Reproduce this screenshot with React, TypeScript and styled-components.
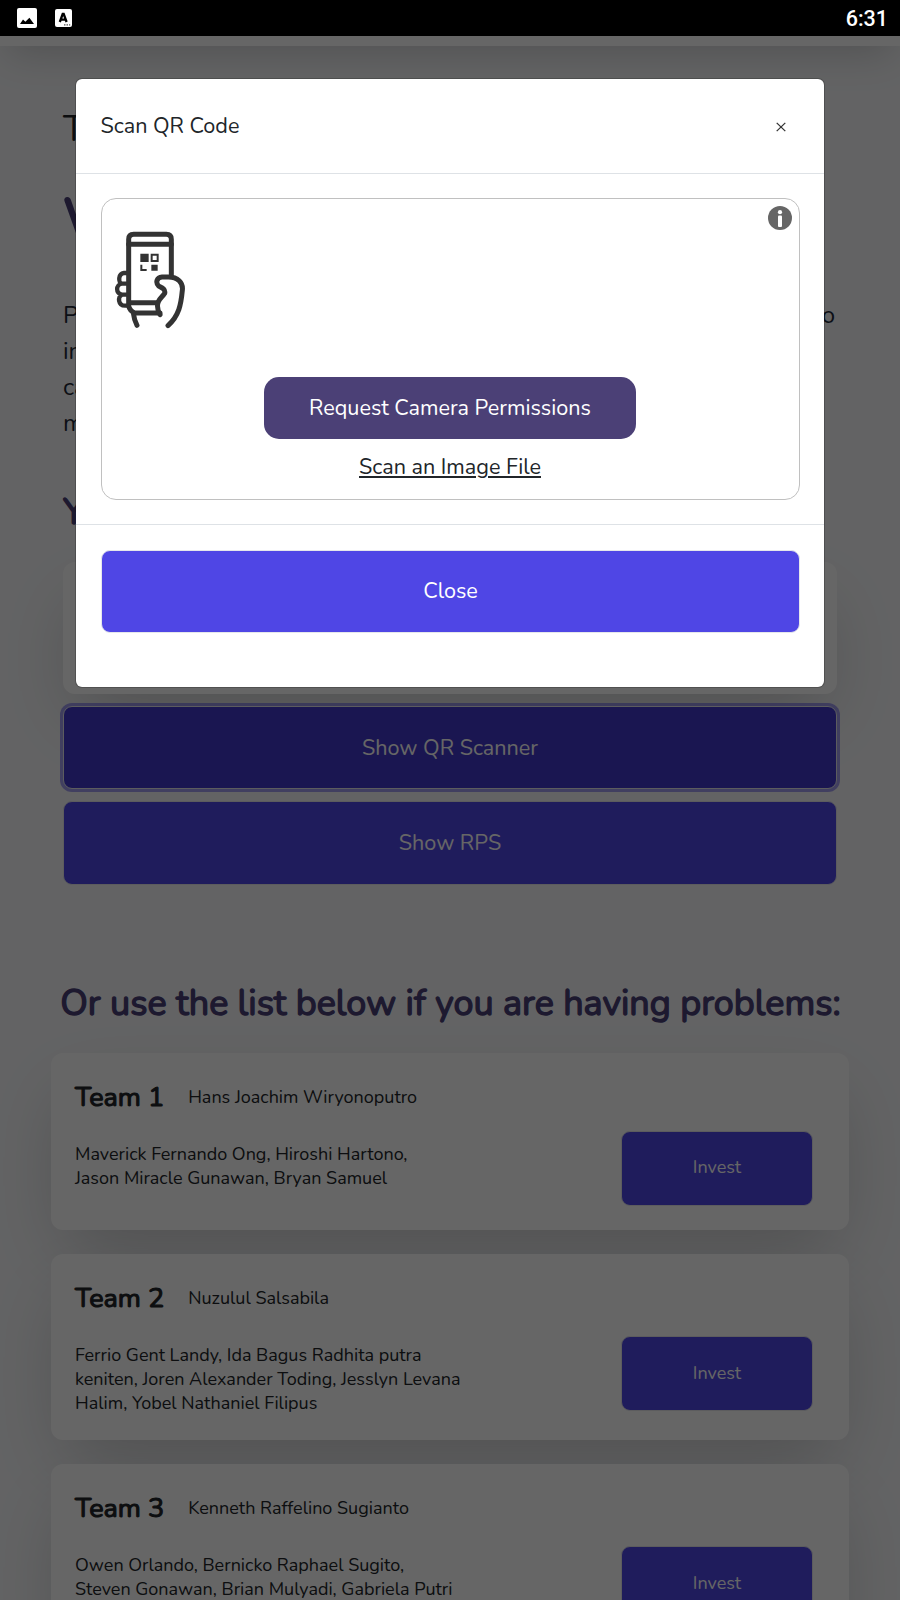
import React from 'react';
import styled, { createGlobalStyle } from 'styled-components';

const GlobalStyle = createGlobalStyle`
  *, *::before, *::after { box-sizing: border-box; }
  body {
    margin: 0;
    background: #f7f8fa;
    color: #212529;
    font-family: Nunito, "Open Sans", sans-serif;
    font-size: 21.6px;
  }
  h1, h2, h3, p { margin: 0; font-weight: 400; }
  button { font-family: inherit; cursor: pointer; }
`;

const elevation = '0 30px 75px -15px rgba(0, 0, 0, 0.2)';

const Screen = styled.div`
  display: flex;
  flex-direction: column;
  width: 900px;
  height: 1600px;
  overflow: hidden;
`;

const StatusBar = styled.header`
  flex: none;
  display: flex;
  align-items: center;
  gap: 18px;
  height: 36px;
  padding: 0 12px 0 17px;
  background: #000;
  color: #fff;
`;

const Clock = styled.time`
  margin-left: auto;
  padding-top: 2px;
  font: 500 21.5px/24px Roboto, sans-serif;
`;

const Viewport = styled.div`
  position: relative;
  flex: 1;
  overflow: hidden;
  background: #f7f8fa;
`;

const NavBar = styled.nav`
  height: 96px;
  margin-top: -86px;
  background: #fff;
  box-shadow: 0 16px 38px -8px rgba(0, 0, 0, 0.17);
`;

const Main = styled.main`
  padding: 60px 51px 0;
`;

const Intro = styled.section`
  padding: 0 12px;
`;

const Greeting = styled.p`
  font-size: 36px;
  line-height: 48px;
`;

const Heading = styled.h1<{ $size: number; $line: number; $top: number }>`
  margin-top: ${p => p.$top}px;
  font-size: ${p => p.$size}px;
  line-height: ${p => p.$line}px;
  color: #4a3f77;
  -webkit-text-stroke: ${p => p.$size / 26}px currentColor;
`;

const Copy = styled.div`
  margin-top: 52px;
  padding-right: 2px;
  font-size: 24px;
  line-height: 36px;
  color: #1f2937;
`;

const CopyLine = styled.p`
  display: flex;
  justify-content: space-between;
`;

const BalanceCard = styled.div`
  height: 132px;
  margin: 29px 0 12px;
  border-radius: 12px;
  background: #fff;
  box-shadow: ${elevation};
`;

const Button = styled.button<{ $focused?: boolean }>`
  display: block;
  position: relative;
  width: 100%;
  height: 83px;
  padding: ${p => (p.$focused ? '1px 0 0' : '0 0 1px')};
  border: 1px solid #e5e7eb;
  border-radius: 9px;
  background: ${p => (p.$focused ? '#4338ca' : '#4f46e5')};
  box-shadow: ${p => (p.$focused ? '0 0 0 3px rgba(79, 70, 229, 0.5)' : 'none')};
  color: #fff;
  font-size: 21.6px;

  & + & { height: 84px; margin-top: 12px; }
`;

const ListHeading = styled(Heading)`
  padding-left: 1px;
  text-align: center;
  white-space: nowrap;
`;

const TeamList = styled.section`
  display: flex;
  flex-direction: column;
  gap: 24px;
  margin-top: 25px;
`;

const TeamCard = styled.article`
  padding: 24px;
  border-radius: 12px;
  background: #fff;
  box-shadow: ${elevation};
`;

const TeamHeader = styled.div`
  display: flex;
  align-items: center;
  gap: 24px;
  height: 42px;
  margin-bottom: 12px;
`;

const TeamName = styled.h2`
  font-size: 27px;
  line-height: 42px;
  -webkit-text-stroke: 1.1px currentColor;
`;

const Mentor = styled.span`
  padding-bottom: 2px;
  font-size: 18px;
  line-height: 24px;
`;

const TeamBody = styled.div`
  display: flex;
  justify-content: space-between;
  padding-right: 12px;
`;

const Members = styled.p<{ $rows: number }>`
  min-height: ${p => p.$rows * 24 + 12}px;
  padding-top: 11px;
  font-size: 18px;
  line-height: 24px;
  white-space: pre-line;
`;

const InvestButton = styled(Button)`
  flex: none;
  align-self: center;
  width: 192px;
  height: 75px;
  margin: -0.3px 0 0.3px;
  padding-bottom: 2px;
  font-size: 18px;
`;

const Overlay = styled.div`
  position: absolute;
  inset: 0;
  padding: 42px 75px;
  background: rgba(0, 0, 0, 0.6);
`;

const Modal = styled.div`
  border: 1px solid rgba(0, 0, 0, 0.2);
  border-radius: 7px;
  background: #fff;
  background-clip: padding-box;
`;

const ModalHeader = styled.div`
  display: flex;
  align-items: center;
  justify-content: space-between;
  height: 95px;
  padding: 0 38.5px 0 24.5px;
  border-bottom: 1px solid #dee2e6;
`;

const ModalTitle = styled.h3`
  font-size: 21.6px;
  line-height: 32px;
`;

const CloseIcon = styled.svg`
  display: block;
  margin-top: 2px;
`;

const ModalBody = styled.div`
  padding: 24px 24px 24px 25px;
`;

const Scanner = styled.div`
  display: flex;
  flex-direction: column;
  align-items: center;
  height: 302px;
  padding-right: 1px;
  border: 1px solid silver;
  border-radius: 15px;
`;

const ScannerTop = styled.div`
  display: flex;
  justify-content: space-between;
  width: 100%;
  height: 178px;
  padding: 7px 6px 0 12px;
`;

const PhoneIcon = styled.svg`
  margin-top: 25px;
`;

const PermissionButton = styled.button`
  width: 372px;
  height: 62px;
  padding: 0;
  border: 0;
  border-radius: 15px;
  background: #4b4076;
  color: #fff;
  font-size: 21.6px;
`;

const FileLink = styled.a`
  margin-top: 12px;
  line-height: 32px;
  color: #212529;
  text-decoration: underline;
  text-decoration-thickness: 2px;
  text-underline-offset: 2px;
`;

const ModalFooter = styled.div`
  height: 163px;
  padding: 25px 24px 0 25px;
  border-top: 1px solid #dee2e6;
`;

const teams = [
  {
    name: 'Team 1',
    mentor: 'Hans Joachim Wiryonoputro',
    members: 'Maverick Fernando Ong, Hiroshi Hartono,\nJason Miracle Gunawan, Bryan Samuel',
    rows: 2,
  },
  {
    name: 'Team 2',
    mentor: 'Nuzulul Salsabila',
    members:
      'Ferrio Gent Landy, Ida Bagus Radhita putra\nkeniten, Joren Alexander Toding, Jesslyn Levana\nHalim, Yobel Nathaniel Filipus',
    rows: 3,
  },
  {
    name: 'Team 3',
    mentor: 'Kenneth Raffelino Sugianto',
    members: 'Owen Orlando, Bernicko Raphael Sugito,\nSteven Gonawan, Brian Mulyadi, Gabriela Putri',
    rows: 3,
  },
];

const PictureIcon = () => (
  <svg width="20" height="20" viewBox="0 0 20 20">
    <rect width="20" height="20" rx="2" fill="#fff" />
    <path d="M3 16 6 11.6 8.4 13.8 12.4 9.8 17 16Z" fill="#000" />
  </svg>
);

const KeyboardIcon = () => (
  <svg width="17" height="18" viewBox="0 0 17 18">
    <rect width="17" height="18" rx="2" fill="#fff" />
    <path d="M4.8 13 7.7 5H8.7L11.6 13M6 10.6h4.6" fill="none" stroke="#000" strokeWidth="2.3" />
    <path d="M9 15.8h1.5M11.5 15.8H13M14 15.8h1.2" stroke="#555" strokeWidth="1.2" />
  </svg>
);

const QrPhone = () => (
  <PhoneIcon width="72" height="98" viewBox="223 153 216 294" fill="none" stroke="#333" strokeWidth="15" strokeLinecap="round" strokeLinejoin="round">
    <path d="M395 284V178Q395 163 380 163H282Q267 163 267 178V378Q270 392 285 399H361" />
    <path d="M267 193H395M270 368H352" />
    <path d="M267 279H253C235 281 235 309 247 311C228 313 227 341 247 344C233 349 235 377 256 377H267M247 311H260M247 344H260" strokeWidth="13" />
    <path d="M281 399C283 416 285 423 292 436M361 404C352 387 351 377 356 365C360 355 368 350 375 340C378 327 367 323 357 318C347 308 351 292 367 291H386C414 291 431 308 428 331C424 374 418 407 385 437" />
    <path d="M302 221h25v25h-25ZM335 254h19v18h-19Z" fill="#333" stroke="none" />
    <path d="M336 224h18v19h-18ZM305 254v16h16" strokeWidth="6" strokeLinecap="butt" strokeLinejoin="miter" />
  </PhoneIcon>
);

const InfoIcon = () => (
  <svg width="24" height="24" viewBox="0 0 24 24">
    <circle cx="12" cy="12" r="12" fill="#666" />
    <circle cx="12" cy="6.2" r="2.1" fill="#fff" />
    <rect x="10" y="9.6" width="4" height="11.4" rx="1" fill="#fff" />
  </svg>
);

export default function App() {
  return (
    <Screen>
      <GlobalStyle />
      <StatusBar>
        <PictureIcon />
        <KeyboardIcon />
        <Clock>6:31</Clock>
      </StatusBar>
      <Viewport>
        <NavBar />
        <Main>
          <Intro>
            <Greeting>T</Greeting>
            <Heading $size={54} $line={54} $top={37}>W</Heading>
            <Copy>
              <CopyLine><span>P</span><span>o</span></CopyLine>
              <CopyLine>in</CopyLine>
              <CopyLine>ca</CopyLine>
              <CopyLine>m</CopyLine>
            </Copy>
            <Heading $size={36} $line={40} $top={52}>Y</Heading>
            <BalanceCard />
            <Button $focused>Show QR Scanner</Button>
            <Button>Show RPS</Button>
          </Intro>
          <ListHeading as="h2" $size={36} $line={48} $top={95}>
            Or use the list below if you are having problems:
          </ListHeading>
          <TeamList>
            {teams.map(team => (
              <TeamCard key={team.name}>
                <TeamHeader>
                  <TeamName>{team.name}</TeamName>
                  <Mentor>{team.mentor}</Mentor>
                </TeamHeader>
                <TeamBody>
                  <Members $rows={team.rows}>{team.members}</Members>
                  <InvestButton>Invest</InvestButton>
                </TeamBody>
              </TeamCard>
            ))}
          </TeamList>
        </Main>
        <Overlay>
          <Modal role="dialog" aria-modal="true">
            <ModalHeader>
              <ModalTitle>Scan QR Code</ModalTitle>
              <CloseIcon width="10" height="10" viewBox="0 0 10 10" stroke="#333" strokeWidth="1.3">
                <path d="M0.7 0.9 9.3 9.1M9.3 0.9 0.7 9.1" />
              </CloseIcon>
            </ModalHeader>
            <ModalBody>
              <Scanner>
                <ScannerTop>
                  <QrPhone />
                  <InfoIcon />
                </ScannerTop>
                <PermissionButton>Request Camera Permissions</PermissionButton>
                <FileLink>Scan an Image File</FileLink>
              </Scanner>
            </ModalBody>
            <ModalFooter>
              <Button>Close</Button>
            </ModalFooter>
          </Modal>
        </Overlay>
      </Viewport>
    </Screen>
  );
}
